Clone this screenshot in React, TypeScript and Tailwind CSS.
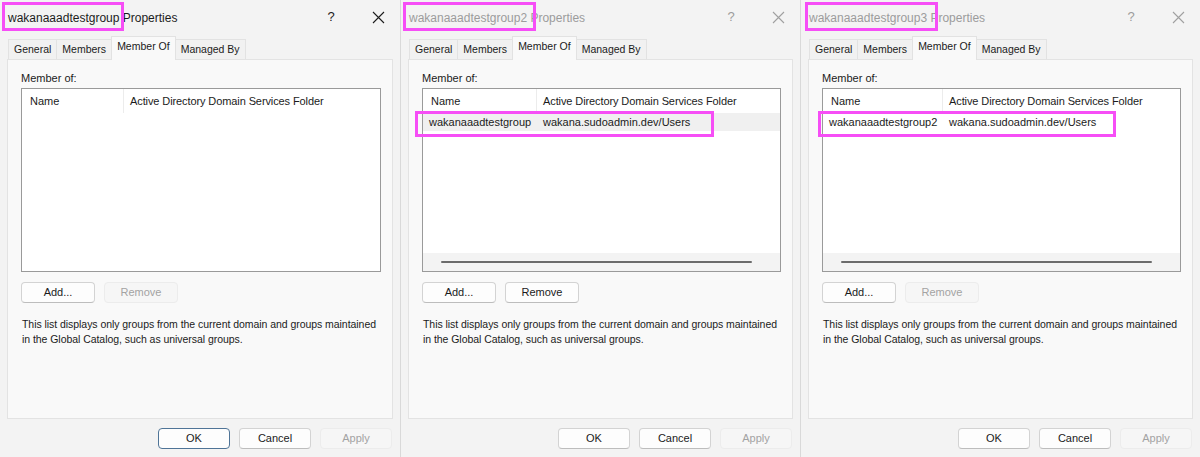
import React from "react";

type DialogProps = {
  name: string;
  active?: boolean;
  nameCol: number;
  row?: { name: string; folder: string; selected?: boolean };
  removeEnabled?: boolean;
  okFocused?: boolean;
  titleBox: string;
  rowBox?: string;
  first?: boolean;
};

function CloseIcon({ muted }: { muted?: boolean }) {
  return (
    <svg width="13" height="13" viewBox="0 0 13 13" className={muted ? "text-[#a0a0a0]" : "text-[#1c1c1c]"}>
      <path d="M1 1 L12 12 M12 1 L1 12" stroke="currentColor" strokeWidth="1.1" fill="none" />
    </svg>
  );
}

function Btn({ label, disabled, focused, w = "w-[74px]" }: { label: string; disabled?: boolean; focused?: boolean; w?: string }) {
  if (disabled) {
    return (
      <div className={`${w} h-[21px] flex items-center justify-center rounded-[4px] border border-[#ececec] bg-[#f6f6f6] text-[#a3a3a3]`}>
        {label}
      </div>
    );
  }
  return (
    <div
      className={`${w} h-[21px] flex items-center justify-center rounded-[4px] bg-[#fdfdfd] text-[#1b1b1b] ${
        focused ? "border-[1.5px] border-[#4f7497]" : "border border-[#d3d3d3] border-b-[#bdbdbd]"
      }`}
    >
      {label}
    </div>
  );
}

function Dialog({ name, active, nameCol, row, removeEnabled, okFocused, titleBox, rowBox, first }: DialogProps) {
  const muted = !active;
  return (
    <div className={`relative w-[400px] h-[457px] shrink-0 bg-[#f3f3f3] flex flex-col ${first ? "" : "border-l border-[#d9d9d9]"}`}>
      {/* title bar */}
      <div className={`h-[34px] flex items-center text-[12px] pl-[8px] ${muted ? "text-[#9c9c9c]" : "text-[#1c1c1c]"}`}>
        <span className="flex-1 pt-[1px]">{name} Properties</span>
        <span className="w-[20px] text-center mr-[27px] text-[13px]">?</span>
        <span className="w-[20px] flex justify-center mr-[12px]">
          <CloseIcon muted={muted} />
        </span>
      </div>

      {/* tabs */}
      <div className="h-[25px] flex items-end pl-[8px] text-[10.5px]">
        <div className="h-[20px] px-[5px] flex items-center border-t border-l border-[#e2e2e2] bg-[#f1f1f1]">General</div>
        <div className="h-[20px] px-[5px] flex items-center border-t border-l border-[#e2e2e2] bg-[#f1f1f1]">Members</div>
        <div className="h-[24px] px-[5px] -mb-[1px] pb-[3px] flex items-center border-t border-l border-r border-[#e2e2e2] bg-[#f9f9f9] relative z-10">
          Member Of
        </div>
        <div className="h-[20px] px-[5px] flex items-center border-t border-r border-[#e2e2e2] bg-[#f1f1f1]">Managed By</div>
      </div>

      {/* panel */}
      <div className="mx-[7px] h-[360px] border border-[#e3e3e3] bg-[#f9f9f9] pl-[13px] pr-[11px] pt-[12px]">
        <div className="h-[13px] leading-[13px]">Member of:</div>
        <div className="mt-[3px] h-[184px] border border-[#9a9a9a] bg-white flex flex-col">
          <div className="h-[24px] flex items-center">
            <div className="h-full flex items-center pl-[8px] border-r border-[#ececec]" style={{ width: nameCol }}>
              Name
            </div>
            <div className="pl-[6px] tracking-[-0.1px]">Active Directory Domain Services Folder</div>
          </div>
          {row && (
            <div className={`h-[18px] flex items-center ${row.selected ? "bg-[#f0f0f0]" : ""}`}>
              <div className="pl-[6px]" style={{ width: nameCol }}>
                {row.name}
              </div>
              <div className="pl-[6px]">{row.folder}</div>
            </div>
          )}
          <div className="flex-1" />
          {row && (
            <div className="h-[18px] bg-[#f3f3f3] flex items-center pl-[18px] pr-[28px]">
              <div className="h-[2px] flex-1 bg-[#6b6b6b] rounded-full" />
            </div>
          )}
        </div>
        <div className="mt-[10px] flex gap-[9px]">
          <Btn label="Add..." />
          <Btn label="Remove" disabled={!removeEnabled} />
        </div>
        <div className="mt-[14px] leading-[15px] pl-[1px] whitespace-nowrap text-[10.5px] tracking-[-0.05px]">
          This list displays only groups from the current domain and groups maintained
          <br />
          in the Global Catalog, such as universal groups.
        </div>
      </div>

      {/* bottom buttons */}
      <div className="mt-[9px] flex justify-end gap-[9px] pr-[8px]">
        <Btn label="OK" w="w-[72px]" focused={okFocused} />
        <Btn label="Cancel" w="w-[72px]" />
        <Btn label="Apply" w="w-[72px]" disabled />
      </div>

      {/* annotation boxes */}
      <div className={`absolute top-[2px] h-[29px] border-[3px] border-[#f64ef6] ${titleBox}`} />
      {rowBox && <div className={`absolute top-[111px] h-[26px] border-[3px] border-[#f64ef6] ${rowBox}`} />}
    </div>
  );
}

export default function App() {
  return (
    <div
      className="w-[1200px] h-[457px] flex overflow-hidden text-[11px] text-[#1b1b1b] bg-[#f3f3f3]"
      style={{ fontFamily: '"Liberation Sans", Arial, sans-serif' }}
    >
      <Dialog
        first
        active
        okFocused
        name="wakanaaadtestgroup"
        nameCol={102}
        titleBox="left-[2px] w-[122px]"
      />
      <Dialog
        name="wakanaaadtestgroup2"
        nameCol={114}
        row={{ name: "wakanaaadtestgroup", folder: "wakana.sudoadmin.dev/Users", selected: true }}
        removeEnabled
        titleBox="left-[2px] w-[133px]"
        rowBox="left-[14px] w-[299px]"
      />
      <Dialog
        name="wakanaaadtestgroup3"
        nameCol={120}
        row={{ name: "wakanaaadtestgroup2", folder: "wakana.sudoadmin.dev/Users" }}
        titleBox="left-[4px] w-[133px]"
        rowBox="left-[17px] w-[298px]"
      />
    </div>
  );
}
